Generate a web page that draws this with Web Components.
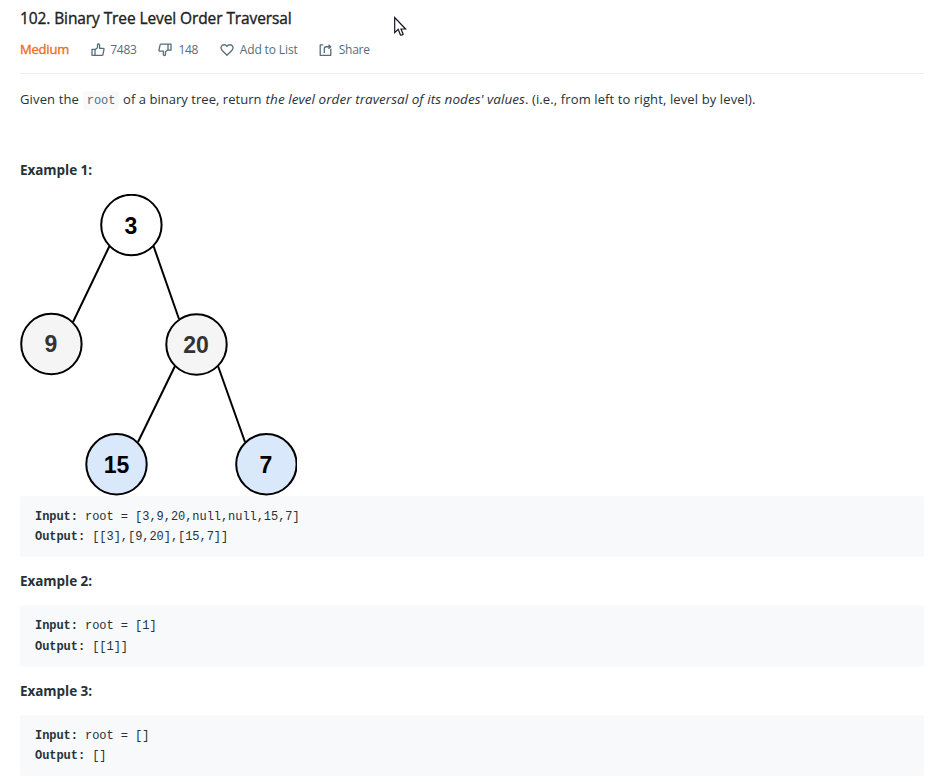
<!DOCTYPE html>
<html lang="en">
<head>
<meta charset="utf-8">
<title>Binary Tree Level Order Traversal</title>
<style>
html,body{margin:0;height:100%;overflow:hidden;background:#fff}
body{font-family:"Open Sans","Noto Sans",sans-serif;font-size:13px;color:#263238}
</style>
</head>
<body>
<problem-page></problem-page>
<script>
const define = (name, html, init) => customElements.define(name, class extends HTMLElement {
  connectedCallback() {
    if (this.shadowRoot) return;
    const root = this.attachShadow({ mode: "open" });
    root.innerHTML = html;
    if (init) init.call(this, root);
  }
});

const ICONS = {
  up: '<path d="M1 6.1h3v6H1zM4 6.6l2.5-2V1.5c.2-1.1 2-1 2.1.3v3.3h3.700c.6 0 .8.4.7.9l-1 5.1c-.1.7-.5 1-1.1 1H4"/>',
  down: '<path d="M13 6.9h-3v-6h3zM10 6.4l-2.5 2v3.100c-.2 1.100-2 1-2.100-.3V7.900H1.700c-.6 0-.8-.4-.7-.9l1-5.100c.1-.7.5-1 1.100-1H10"/>',
  heart: '<path d="M7 12 2.200 7.200C-.3 4.400 1.600 1.500 4.200 1.500 5.600 1.500 6.500 2.300 7 3.200 7.500 2.300 8.400 1.500 9.800 1.500 12.400 1.500 14.300 4.400 11.800 7.200Z"/>',
  share: '<path d="M4.200 1.700H1.200v10.400h10.600V5.500M5.300 9.800V5.700C5.300 4.300 6 3.500 7.300 3.500h3.700M9.500 1.500l2.200 2-2.200 2"/>'
};

define("stat-item", `<style>
:host{display:flex;align-items:center;gap:var(--gap,5.700px);color:#546e7a;font-size:12px;line-height:20px;white-space:nowrap}
svg{width:14px;height:14px;fill:none;stroke:currentColor;stroke-width:1.3;stroke-linejoin:round;flex:none}
</style><svg viewBox="0 0 14 13.500"></svg><span><slot></slot></span>`, function (root) {
  root.querySelector("svg").innerHTML = ICONS[this.getAttribute("icon")];
});

define("problem-header", `<style>
:host{display:block;border-bottom:1px solid #eee;box-sizing:border-box;height:74px;padding-top:7px}
h1{margin:0;font-size:15.500px;font-weight:500;line-height:22px;height:21px;letter-spacing:-.1px;color:#212121;-webkit-text-stroke:.35px #212121}
.row{display:flex;align-items:center;margin-top:12px;height:20px}
b{width:70.500px;font-weight:500;letter-spacing:-.21px;color:#ef6c20;-webkit-text-stroke:.35px #ef6c20;line-height:20px;margin-top:-2px}
</style><h1>102. Binary Tree Level Order Traversal</h1>
<div class="row"><b>Medium</b>
<stat-item icon="up" style="width:67.500px;letter-spacing:-.24px">7483</stat-item>
<stat-item icon="down" style="width:62px;--gap:6.500px;letter-spacing:-.36px">148</stat-item>
<stat-item icon="heart" style="width:99px;letter-spacing:-.12px">Add to List</stat-item>
<stat-item icon="share" style="letter-spacing:-.25px">Share</stat-item></div>`);

define("inline-code", `<style>
:host{display:inline-block;box-sizing:border-box;width:36px;height:19px;margin:0 4px;border-radius:3px;background:#f7f9fa;color:#546e7a;font:12px/20px "Liberation Mono",monospace;text-align:center;letter-spacing:-.05px;vertical-align:baseline}
</style><slot></slot>`);

define("problem-statement", `<style>
:host{display:block;height:87px;padding-top:15px;line-height:21px;white-space:nowrap}
p{margin:0}
.a{letter-spacing:.14px}.b{letter-spacing:.04px}
em{font-size:13.500px;letter-spacing:.05px;margin-left:4px}
.c{letter-spacing:.12px}
</style><p><span class="a">Given the</span><inline-code>root</inline-code><span class="b">of a binary tree, return</span><em>the level order traversal of its nodes' values</em><span class="c">. (i.e., from left to right, level by level).</span></p>`);

define("binary-tree", `<style>
:host{display:block;width:277px;height:302px}
svg{display:block}
line,circle{stroke:#000;stroke-width:2}
text{font:bold 23px "Liberation Sans",Arial,sans-serif;text-anchor:middle}
</style><svg width="277" height="302" viewBox="20 194 277 302">
<line x1="109.500" y1="246" x2="73" y2="322"/><line x1="153.500" y1="246" x2="179" y2="319"/>
<line x1="175" y1="366" x2="138" y2="442"/><line x1="218" y1="366" x2="245" y2="442"/>
<circle cx="131.400" cy="225" r="30.200" fill="#fff"/><circle cx="51.400" cy="344" r="30.200" fill="#f5f5f5"/>
<circle cx="196.500" cy="344.500" r="30.200" fill="#f5f5f5"/><circle cx="116.500" cy="464.300" r="30.200" fill="#dae8fc"/>
<circle cx="266.400" cy="464.300" r="30.200" fill="#dae8fc"/>
<text x="131" y="233.500">3</text><text x="51" y="351.500" fill="#333">9</text><text x="196" y="352.500" fill="#333">20</text>
<text x="116.500" y="472.500">15</text><text x="266" y="472.500">7</text></svg>`);

define("example-title", `<style>
:host{display:block;font-size:13.500px;font-weight:700;line-height:20px;letter-spacing:-.05px;color:#263238}
</style><slot></slot>`);

define("io-block", `<style>
:host{display:block;box-sizing:border-box;height:61px;padding:11px 15px 9px;border-radius:3px;background:#f7f9fa;color:#263238;font:12px/var(--line,20px) "Liberation Mono",monospace;letter-spacing:-.05px;white-space:pre}
</style><div><b>Input: </b><slot name="in"></slot></div><div><b>Output: </b><slot name="out"></slot></div>`);

define("mouse-pointer", `<style>
:host{position:absolute;left:394px;top:16px;width:14px;height:21px}
svg{display:block}
</style><svg width="14" height="21" viewBox="0 0 14 21"><path d="M.7 1.500v15.200l3.500-3.400 2.200 5.500q1.200 1 2.800-.6L7 13h4.600Z" fill="#fff" stroke="#15151f" stroke-width="1.200"/></svg>`);

define("problem-page", `<style>
:host{display:block;width:904px;margin-left:20px}
</style>
<problem-header></problem-header>
<problem-statement></problem-statement>
<example-title style="margin-top:-16px">Example 1:</example-title>
<binary-tree style="margin-top:14px"></binary-tree>
<io-block><span slot="in">root = [3,9,20,null,null,15,7]</span><span slot="out">[[3],[9,20],[15,7]]</span></io-block>
<example-title style="margin:14px 0">Example 2:</example-title>
<io-block style="height:62px;--line:21px"><span slot="in">root = [1]</span><span slot="out">[[1]]</span></io-block>
<example-title style="margin:14px 0">Example 3:</example-title>
<io-block><span slot="in">root = []</span><span slot="out">[]</span></io-block>
<mouse-pointer></mouse-pointer>`);
</script>
</body>
</html>
